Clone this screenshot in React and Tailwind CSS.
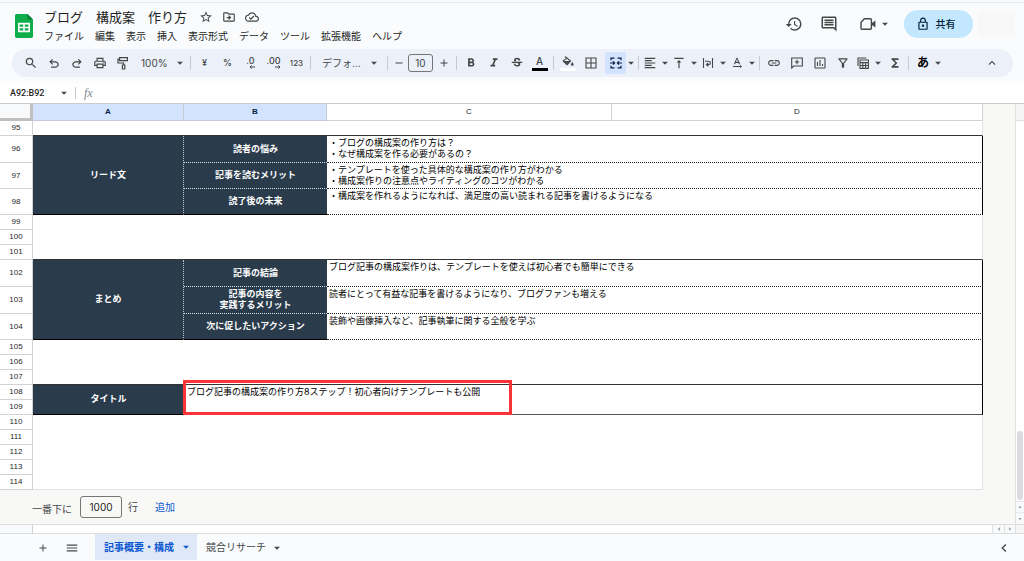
import React from "react";
import {
  MdAdd,
  MdArrowDropDown,
  MdArrowDropUp,
  MdArrowLeft,
  MdArrowRight,
  MdExpandLess,
  MdFormatAlignLeft,
  MdFormatBold,
  MdFormatItalic,
  MdFunctions,
  MdHistory,
  MdKeyboardArrowLeft,
  MdLink,
  MdMenu,
  MdOutlineCloudDone,
  MdOutlineComment,
  MdOutlineDriveFileMove,
  MdOutlineFilterAlt,
  MdOutlineLock,
  MdOutlinePrint,
  MdRemove,
  MdSearch,
  MdStarBorder,
  MdStrikethroughS,
  MdTextRotationNone,
  MdVerticalAlignTop,
} from "react-icons/md";

const menus = [
  "ファイル",
  "編集",
  "表示",
  "挿入",
  "表示形式",
  "データ",
  "ツール",
  "拡張機能",
  "ヘルプ",
];

const SheetsLogo = () => (
  <svg viewBox="0 0 18 24" className="h-6 w-[18px]">
    <path
      d="M1.7 0H12.5L18 5.5V22.3C18 23.3 17.3 24 16.3 24H1.7C.7 24 0 23.3 0 22.3V1.7C0 .7.7 0 1.7 0Z"
      fill="#0eac4b"
    />
    <path d="M12.5 0L18 5.5H12.5Z" fill="#0b7f37" />
    <path
      d="M3 8.8H15V18.2H3ZM4.6 10.4V12.7H8.2V10.4ZM9.8 10.4V12.7H13.4V10.4ZM4.6 14.3V16.6H8.2V14.3ZM9.8 14.3V16.6H13.4V14.3Z"
      fill="#fff"
      fillRule="evenodd"
    />
  </svg>
);

const UndoIcon = ({ className }) => (
  <svg viewBox="0 -960 960 960" fill="currentColor" className={className}>
    <path d="M280-160v-80h284q63 0 109.5-40T720-380q0-60-46.5-100T564-520H312l104 104-56 56-200-200 200-200 56 56-104 104h252q97 0 169.5 63T806-380q0 94-72.5 157T564-160H280Z" />
  </svg>
);

const RollerIcon = () => (
  <svg viewBox="0 0 12 14" fill="none" stroke="currentColor" strokeWidth="1.2" className="h-[14px] w-3">
    <path d="M2.6 1.6H10.4V4.6H2.6ZM2.6 3H1V7H6.6V9M5.4 9H7.8V13H5.4Z" />
  </svg>
);

const VideoIcon = () => (
  <svg viewBox="0 0 16 14" className="h-[14px] w-4">
    <path
      d="M4.4 1.7H10.4Q11.4 1.7 11.4 2.7V11.3Q11.4 12.3 10.4 12.3H2Q1 12.3 1 11.3V5.2Z"
      fill="none"
      stroke="currentColor"
      strokeWidth="1.4"
    />
    <path d="M12 6L15.4 3.4V10.6L12 8Z" fill="currentColor" />
  </svg>
);

const MergeIcon = () => (
  <svg viewBox="0 0 12 12" fill="none" stroke="currentColor" strokeWidth="1.2" className="h-3 w-3">
    <path d="M4.5 1.2H1V3.2M7.5 1.2H11V3.2M4.5 10.8H1V8.8M7.5 10.8H11V8.8" />
    <path d="M0 6H4M3 4.4L4.6 6L3 7.6M12 6H8M9 4.4L7.4 6L9 7.6" />
  </svg>
);

const BordersIcon = () => (
  <svg viewBox="0 0 12 12" fill="none" stroke="currentColor" strokeWidth="1.1" className="h-3 w-3">
    <path d="M1 1H11V11H1ZM6 1V11M1 6H11" />
  </svg>
);

const ChartIcon = () => (
  <svg viewBox="0 0 12 12" fill="none" stroke="currentColor" strokeWidth="1.1" className="h-3 w-3">
    <path d="M1.6 1H10.4Q11 1 11 1.6V10.4Q11 11 10.4 11H1.6Q1 11 1 10.4V1.6Q1 1 1.6 1ZM3.5 5V9M6 3V9M8.5 7V9" />
  </svg>
);

const WrapIcon = () => (
  <svg viewBox="0 0 12 12" fill="none" stroke="currentColor" strokeWidth="1.1" className="h-3 w-3">
    <path d="M1.5 1V11M10.5 1V11M3 4.2H6.6Q8.4 4.2 8.4 6Q8.4 7.6 6.6 7.6H4.6M6.2 5.8L4.4 7.6L6.2 9.4" />
  </svg>
);

const AddCommentIcon = () => (
  <svg viewBox="0 0 12 12" fill="none" stroke="currentColor" strokeWidth="1.1" className="h-3 w-3">
    <path d="M.7 11V1H11.3V9H2.8ZM6 2.8V7.2M3.8 5H8.2" />
  </svg>
);

const TableViewIcon = () => (
  <svg viewBox="0 0 12 12" fill="none" stroke="currentColor" strokeWidth="1.1" className="h-3 w-3">
    <path d="M9.4 1H1V9M3 3H11.4V11.4H3ZM3 5.6H11.4M3 8.5H11.4M5.8 5.6V11.4M8.6 5.6V11.4" />
  </svg>
);

const BucketIcon = () => (
  <span className="flex h-[15px] w-4 flex-col items-center justify-between">
    <svg viewBox="0 0 12 10" className="h-[10px] w-3">
      <path
        d="M3 .5L8.6 5L5 8.8L1.2 5L5.2 1.6"
        fill="none"
        stroke="currentColor"
        strokeWidth="1.1"
      />
      <path d="M1.6 5H8.4L5 8.4ZM10.3 6Q11.6 7.6 11.6 8.4A1.3 1.3 0 0 1 9 8.4Q9 7.6 10.3 6Z" fill="currentColor" />
    </svg>
    <span className="h-[3px] w-4 bg-white" />
  </span>
);

const Caret = () => <MdArrowDropDown className="pointer-events-none h-[14px] w-[14px] shrink-0" />;

const Divider = () => <span className="mx-[2px] h-[14px] w-px shrink-0 bg-[#c7cbd1]" />;

const Tool = ({ label, children }) => (
  <button
    type="button"
    aria-label={label}
    className="flex h-[22px] w-[23px] shrink-0 items-center justify-center"
  >
    {children}
  </button>
);

// icon together with its drop-down arrow
const MenuTool = ({ label, children }) => (
  <button type="button" aria-label={label} className="flex h-[22px] w-[29px] shrink-0 items-center">
    <span className="flex w-[18px] shrink-0 justify-center">{children}</span>
    <span className="flex w-[11px] shrink-0 justify-center">
      <Caret />
    </span>
  </button>
);

const Decimal = ({ text, right }) => (
  <span className="flex flex-col items-center text-[9px] leading-[8px] font-medium">
    {text}
    <svg
      viewBox="0 0 6 4"
      fill="none"
      stroke="currentColor"
      className={right ? "h-1 w-[6px] rotate-180 self-end" : "h-1 w-[6px] self-end"}
    >
      <path d="M6 2H1M2.6 .4L1 2L2.6 3.6" />
    </svg>
  </span>
);

const Header = () => (
  <header className="flex items-center pr-[9px] pl-[15px]">
    <SheetsLogo />
    <div className="pt-1 pb-1 pl-[11px]">
      <div className="flex h-5 items-center text-[#444746]">
        <h1 className="text-[13px] leading-5 whitespace-pre text-[#1f1f1f]">ブログ　構成案　作り方</h1>
        <div className="flex gap-[9px] pl-3">
          <button type="button" aria-label="スター">
            <MdStarBorder className="h-[14px] w-[14px]" />
          </button>
          <button type="button" aria-label="移動">
            <MdOutlineDriveFileMove className="h-[14px] w-[14px]" />
          </button>
          <button type="button" aria-label="保存済み">
            <MdOutlineCloudDone className="h-[14px] w-[14px]" />
          </button>
        </div>
      </div>
      <nav className="flex h-[18px] items-center gap-[11px] text-[10px] text-[#1f1f1f]">
        {menus.map((m) => (
          <button type="button" key={m}>
            {m}
          </button>
        ))}
      </nav>
    </div>

    <div className="ml-auto flex items-center pb-1 text-[#444746]">
      <button type="button" aria-label="変更履歴">
        <MdHistory className="h-[18px] w-[18px]" />
      </button>
      <button type="button" aria-label="コメント" className="ml-[17px]">
        <MdOutlineComment className="h-[18px] w-[18px]" />
      </button>
      <button type="button" aria-label="通話" className="ml-[22px] flex items-center gap-[2px]">
        <VideoIcon />
        <Caret />
      </button>
      <button
        type="button"
        className="ml-3 flex h-7 w-[69px] items-center justify-center gap-[6px] rounded-full bg-[#c2e7ff] pr-[6px] text-[10px] font-medium text-[#001d35]"
      >
        <MdOutlineLock className="h-[14px] w-[14px]" />
        共有
      </button>
      <div className="ml-[5px] h-[26px] w-[37px] bg-[#f8f8f8]" />
    </div>
  </header>
);

const Toolbar = () => (
  <div className="mr-[11px] mb-[6px] ml-3 flex h-7 items-center rounded-full bg-[#ebf0f9] pr-[10px] pl-[7px] text-[#444746]">
    <Tool label="検索">
      <MdSearch className="h-[14px] w-[14px]" />
    </Tool>
    <Tool label="元に戻す">
      <UndoIcon className="h-[14px] w-[14px]" />
    </Tool>
    <Tool label="やり直し">
      <UndoIcon className="h-[14px] w-[14px] -scale-x-100" />
    </Tool>
    <Tool label="印刷">
      <MdOutlinePrint className="h-[14px] w-[14px]" />
    </Tool>
    <Tool label="書式を貼り付け">
      <RollerIcon />
    </Tool>
    <div className="flex w-[54px] shrink-0 items-center pl-[7px]">
      <select aria-label="ズーム" className="w-8 appearance-none text-[10px]">
        <option>100%</option>
      </select>
      <Caret />
    </div>
    <Divider />
    <Tool label="通貨">
      <span className="text-[9px] font-medium">¥</span>
    </Tool>
    <Tool label="パーセント">
      <span className="text-[9px] font-medium">%</span>
    </Tool>
    <Tool label="小数点以下を減らす">
      <Decimal text=".0" />
    </Tool>
    <Tool label="小数点以下を増やす">
      <Decimal text=".00" right />
    </Tool>
    <Tool label="表示形式の詳細">
      <span className="text-[8px] font-medium">123</span>
    </Tool>
    <Divider />
    <div className="flex w-[72px] shrink-0 items-center pl-[9px]">
      <select aria-label="フォント" className="w-[45px] appearance-none text-[10px]">
        <option>デフォ…</option>
      </select>
      <Caret />
    </div>
    <Divider />
    <button type="button" aria-label="縮小" className="flex w-[18px] shrink-0 justify-center">
      <MdRemove className="h-3 w-3" />
    </button>
    <input
      aria-label="フォントサイズ"
      defaultValue="10"
      className="h-[18px] w-[25px] shrink-0 rounded-[3px] border border-[#747775] text-center text-[10px]"
    />
    <button type="button" aria-label="拡大" className="flex w-[21px] shrink-0 justify-center">
      <MdAdd className="h-3 w-3" />
    </button>
    <Divider />
    <Tool label="太字">
      <MdFormatBold className="h-[14px] w-[14px]" />
    </Tool>
    <Tool label="斜体">
      <MdFormatItalic className="h-[14px] w-[14px]" />
    </Tool>
    <Tool label="取り消し線">
      <MdStrikethroughS className="h-[14px] w-[14px]" />
    </Tool>
    <Tool label="テキストの色">
      <span className="flex h-[15px] w-4 flex-col items-center justify-between text-[10px] leading-[11px] font-medium">
        A
        <span className="h-[3px] w-4 bg-black" />
      </span>
    </Tool>
    <Divider />
    <Tool label="塗りつぶしの色">
      <BucketIcon />
    </Tool>
    <Tool label="枠線">
      <BordersIcon />
    </Tool>
    <button
      type="button"
      aria-label="セルを結合"
      className="ml-[3px] flex h-[22px] w-[21px] shrink-0 items-center justify-center rounded-[2px] bg-[#d3e3fd] text-[#041e49]"
    >
      <MergeIcon />
    </button>
    <button type="button" aria-label="結合の種類" className="flex w-[10px] shrink-0 justify-center">
      <Caret />
    </button>
    <Divider />
    <MenuTool label="水平方向の配置">
      <MdFormatAlignLeft className="h-[14px] w-[14px]" />
    </MenuTool>
    <MenuTool label="垂直方向の配置">
      <MdVerticalAlignTop className="h-[14px] w-[14px]" />
    </MenuTool>
    <MenuTool label="テキストを折り返す">
      <WrapIcon />
    </MenuTool>
    <MenuTool label="テキストの回転">
      <MdTextRotationNone className="h-[14px] w-[14px]" />
    </MenuTool>
    <Divider />
    <Tool label="リンクを挿入">
      <MdLink className="h-[14px] w-[14px]" />
    </Tool>
    <Tool label="コメントを挿入">
      <AddCommentIcon />
    </Tool>
    <Tool label="グラフを挿入">
      <ChartIcon />
    </Tool>
    <Tool label="フィルタ">
      <MdOutlineFilterAlt className="h-[14px] w-[14px]" />
    </Tool>
    <MenuTool label="フィルタ表示">
      <TableViewIcon />
    </MenuTool>
    <Tool label="関数">
      <MdFunctions className="h-[14px] w-[14px]" />
    </Tool>
    <Divider />
    <button
      type="button"
      aria-label="入力ツール"
      className="flex w-[34px] shrink-0 items-center justify-between pl-[6px] text-[12px] leading-4 font-bold text-black"
    >
      あ
      <span className="text-[#444746]">
        <Caret />
      </span>
    </button>
    <div className="ml-auto">
      <Tool label="メニューを非表示">
        <MdExpandLess className="h-[14px] w-[14px]" />
      </Tool>
    </div>
  </div>
);

const FormulaBar = () => (
  <div className="flex h-5 items-center bg-white pl-[10px] text-[#444746]">
    <input
      aria-label="名前ボックス"
      defaultValue="A92:B92"
      className="w-[47px] font-['Roboto'] text-[9px] leading-4 font-medium text-[#1f1f1f]"
    />
    <Caret />
    <span className="ml-1 h-3 w-px bg-[#c7cbd1]" />
    <label htmlFor="formula" className="pl-2 font-['Liberation_Serif'] text-[12px] leading-4 text-[#80868b] italic">
      fx
    </label>
    <input id="formula" className="ml-2 grow text-[10px] outline-none" />
  </div>
);

const RowHead = ({ n }) => (
  <th
    scope="row"
    className="border-r border-b border-[#d0d2d4] bg-white p-0 text-center font-['Liberation_Sans'] text-[8px] leading-3 font-normal text-[#1f1f1f]"
  >
    {n}
  </th>
);

const EmptyRow = ({ n, edge = "border-r-[#e1e1e1]", bottom = "border-b-0" }) => (
  <tr className="h-[15px]">
    <RowHead n={n} />
    <td colSpan={4} className={`border-r bg-white p-0 ${edge} ${bottom}`} />
  </tr>
);

const BlockTitle = ({ children, rows, className = "" }) => (
  <td
    rowSpan={rows}
    className={`border-b border-b-black bg-[#2a3b4b] px-0 pt-0 pb-[2px] text-center text-[9px] leading-[11px] font-bold text-white ${className}`}
  >
    {children}
  </td>
);

// three rows that share one dark title cell on the left
const Block = ({ title, rows }) =>
  rows.map((row, i) => {
    const last = i === rows.length - 1;
    return (
      <tr key={row.n} className={row.height}>
        <RowHead n={row.n} />
        {i === 0 && (
          <BlockTitle
            rows={rows.length}
            className="border-r border-r-[#c3c8cd] [border-right-style:dotted]"
          >
            {title}
          </BlockTitle>
        )}
        <td
          className={`border-b bg-[#2a3b4b] px-0 pt-0 pb-[2px] text-center text-[9px] leading-[11px] font-bold whitespace-pre-line text-white ${
            last ? "border-b-black" : "border-b-[#dfe2e5] [border-bottom-style:dotted]"
          }`}
        >
          {row.label}
        </td>
        <td
          colSpan={2}
          className="border-r border-b border-r-black border-b-[#222] [border-bottom-style:dotted] bg-white px-[2px] pt-px pb-0 align-top text-[9px] leading-[11px] whitespace-pre-line text-black"
        >
          {row.text}
        </td>
      </tr>
    );
  });

const leadRows = [
  {
    n: 96,
    height: "h-[27px]",
    label: "読者の悩み",
    text: "・ブログの構成案の作り方は？\n・なぜ構成案を作る必要があるの？",
  },
  {
    n: 97,
    height: "h-[26px]",
    label: "記事を読むメリット",
    text: "・テンプレートを使った具体的な構成案の作り方がわかる\n・構成案作りの注意点やライティングのコツがわかる",
  },
  {
    n: 98,
    height: "h-[26px]",
    label: "読了後の未来",
    text: "・構成案を作れるようになれば、満足度の高い読まれる記事を書けるようになる",
  },
];

const summaryRows = [
  {
    n: 102,
    height: "h-[27px]",
    label: "記事の結論",
    text: "ブログ記事の構成案作りは、テンプレートを使えば初心者でも簡単にできる",
  },
  {
    n: 103,
    height: "h-[27px]",
    label: "記事の内容を\n実践するメリット",
    text: "読者にとって有益な記事を書けるようになり、ブログファンも増える",
  },
  {
    n: 104,
    height: "h-[26px]",
    label: "次に促したいアクション",
    text: "装飾や画像挿入など、記事執筆に関する全般を学ぶ",
  },
];

const Sheet = () => (
  <table className="w-[983px] table-fixed border-separate border-spacing-0">
    <colgroup>
      <col className="w-[33px]" />
      <col className="w-[151px]" />
      <col className="w-[143px]" />
      <col className="w-[285px]" />
      <col className="w-[371px]" />
    </colgroup>
    <thead>
      <tr className="h-[17px] font-['Liberation_Sans'] text-[8px] leading-3 text-[#1f1f1f]">
        <td className="border-r-3 border-b-3 border-[#c0c0c0] bg-[#f8f9fa] p-0" />
        <th className="border-r border-b border-[#c3cbd8] bg-[#d3e3fd] p-0 font-bold text-[#041e49]">A</th>
        <th className="border-r border-b border-[#c3cbd8] bg-[#d3e3fd] p-0 font-bold text-[#041e49]">B</th>
        <th className="border-r border-b border-[#d0d2d4] bg-white p-0 font-normal">C</th>
        <th className="border-r border-b border-[#d0d2d4] bg-white p-0 font-normal">D</th>
      </tr>
    </thead>
    <tbody>
      <EmptyRow n={95} bottom="border-b border-b-[#333]" />
      <Block title="リード文" rows={leadRows} />
      <EmptyRow n={99} />
      <EmptyRow n={100} />
      <EmptyRow n={101} bottom="border-b border-b-[#333]" />
      <Block title="まとめ" rows={summaryRows} />
      <EmptyRow n={105} edge="border-r-black" />
      <EmptyRow n={106} edge="border-r-black" />
      <EmptyRow n={107} edge="border-r-black" bottom="border-b border-b-[#333]" />
      <tr className="h-[15px]">
        <RowHead n={108} />
        <BlockTitle rows={2}>タイトル</BlockTitle>
        <td
          colSpan={3}
          rowSpan={2}
          className="relative border-r border-b border-r-black border-b-[#555] bg-white px-[3px] pt-px pb-0 align-top text-[9px] leading-[11px] text-black"
        >
          ブログ記事の構成案の作り方8ステップ！初心者向けテンプレートも公開
          <span className="absolute -top-[5px] -left-px h-[35px] w-[329px] border-3 border-[#fb3336]" />
        </td>
      </tr>
      <tr className="h-[15px]">
        <RowHead n={109} />
      </tr>
      <EmptyRow n={110} />
      <EmptyRow n={111} />
      <EmptyRow n={112} />
      <EmptyRow n={113} />
      <EmptyRow n={114} bottom="border-b border-b-[#e1e1e1]" />
    </tbody>
  </table>
);

const AddRows = () => (
  <div className="flex h-[35px] items-center border-b border-[#dcdddd] pl-8 text-[10px] text-[#444746]">
    <label htmlFor="rows" className="pt-1">
      一番下に
    </label>
    <input
      id="rows"
      defaultValue="1000"
      className="ml-2 h-[22px] w-[42px] rounded-[3px] border border-[#747775] text-center text-[10px] text-[#1f1f1f]"
    />
    <span className="pl-[6px]">行</span>
    <button type="button" className="ml-[17px] text-[#0b57d0]">
      追加
    </button>
  </div>
);

const VerticalScroll = () => (
  <div className="flex w-[9px] shrink-0 flex-col items-center border-l border-[#e1e1e1] bg-white text-[#80868b]">
    <div className="h-[17px] w-full border-b border-[#e1e1e1] bg-[#f5f5f5]" />
    <div className="mt-auto h-[69px] w-[6px] rounded-full bg-[#dadce0]" />
    <div className="mt-px flex h-3 w-full items-center justify-center border-y border-[#e8e8e8] bg-[#f8f9fa]">
      <MdArrowDropUp className="h-2 w-2" />
    </div>
    <div className="flex h-3 w-full items-center justify-center border-b border-[#dcdddd] bg-[#f8f9fa]">
      <MdArrowDropDown className="h-2 w-2" />
    </div>
  </div>
);

const HorizontalScroll = () => (
  <div className="flex h-[9px] border-b border-[#dcdddd] bg-white text-[#80868b]">
    <div className="w-[33px] border-r border-[#d0d2d4] bg-[#f8f9fa]" />
    <div className="ml-auto flex w-3 items-center justify-center border-l border-[#e1e1e1] bg-[#f8f9fa]">
      <MdArrowLeft className="h-2 w-2" />
    </div>
    <div className="flex w-3 items-center justify-center border-x border-[#e1e1e1] bg-[#f8f9fa]">
      <MdArrowRight className="h-2 w-2" />
    </div>
    <div className="w-2 bg-[#f5f5f5]" />
  </div>
);

const TabBar = () => (
  <footer className="flex h-[27px] items-center pl-[37px] text-[10px] text-[#444746]">
    <button type="button" aria-label="シートを追加">
      <MdAdd className="h-3 w-3" />
    </button>
    <button type="button" aria-label="すべてのシート" className="ml-4">
      <MdMenu className="h-[14px] w-[14px]" />
    </button>
    <button
      type="button"
      className="ml-4 flex h-[26px] w-[102px] items-center justify-between self-start bg-[#dfe8f7] pr-1 pl-[9px] font-bold text-[#0b57d0]"
    >
      記事概要・構成
      <Caret />
    </button>
    <button type="button" className="flex items-center gap-1 pl-[9px]">
      競合リサーチ
      <Caret />
    </button>
    <button type="button" aria-label="サイドパネルを表示" className="mr-3 ml-auto">
      <MdKeyboardArrowLeft className="h-4 w-4" />
    </button>
  </footer>
);

const App = () => {
  return (
    <div className="overflow-hidden bg-[#f9fbfd] font-['Inter','Noto_Sans_CJK_JP',sans-serif]">
      <div className="h-[3px] border-b border-[#e9eaeb] bg-[#f8f9fa]" />
      <Header />
      <Toolbar />
      <FormulaBar />
      <main className="flex border-t border-[#c9cbcd]">
        <div className="min-w-0 grow bg-[#f8f8f7]">
          <Sheet />
          <AddRows />
        </div>
        <VerticalScroll />
      </main>
      <HorizontalScroll />
      <TabBar />
    </div>
  );
};

export default App;
